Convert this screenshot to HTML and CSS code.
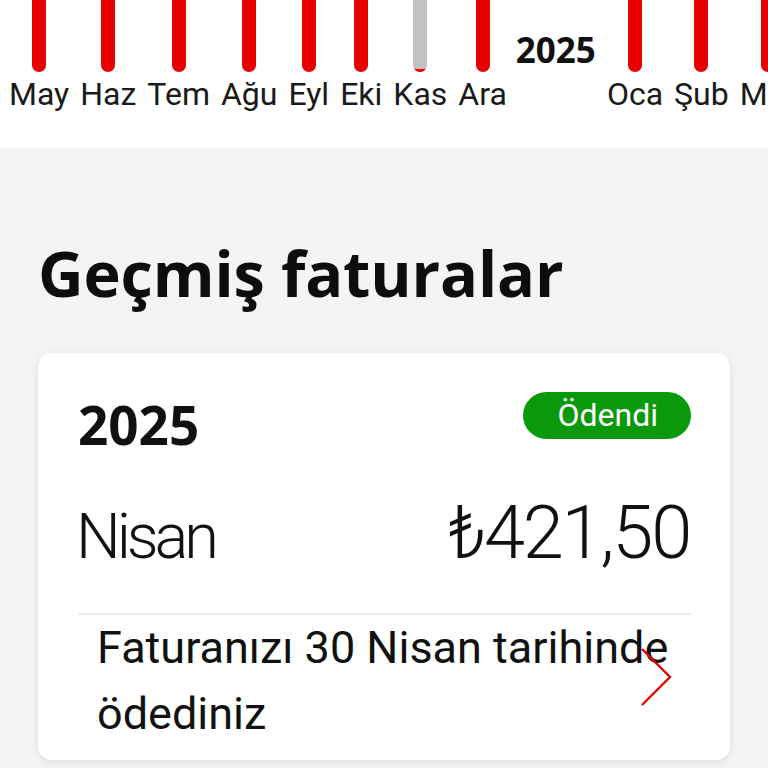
FILE: index.html
```html
<!DOCTYPE html>
<html lang="tr">
<head>
<meta charset="utf-8">
<title>Geçmiş faturalar</title>
<link rel="stylesheet" href="styles.css">
</head>
<body>
<header class="chart">
  <div class="months">
    <div class="month"><span class="bar"></span><span class="label">May</span></div>
    <div class="month"><span class="bar"></span><span class="label">Haz</span></div>
    <div class="month"><span class="bar"></span><span class="label">Tem</span></div>
    <div class="month"><span class="bar"></span><span class="label">Ağu</span></div>
    <div class="month"><span class="bar"></span><span class="label">Eyl</span></div>
    <div class="month"><span class="bar"></span><span class="label">Eki</span></div>
    <div class="month"><span class="bar bar-low"><span class="bar-fill"></span></span><span class="label">Kas</span></div>
    <div class="month"><span class="bar"></span><span class="label">Ara</span></div>
    <div class="year">2025</div>
    <div class="month"><span class="bar"></span><span class="label">Oca</span></div>
    <div class="month"><span class="bar"></span><span class="label">Şub</span></div>
    <div class="month"><span class="bar"></span><span class="label">Mar</span></div>
  </div>
</header>
<main class="content">
  <h1 class="title">Geçmiş faturalar</h1>
  <section class="card">
    <div class="card-top">
      <span class="card-year">2025</span>
      <span class="badge">Ödendi</span>
    </div>
    <div class="card-amount">
      <span class="bill-month">Nisan</span>
      <span class="amount">₺421,50</span>
    </div>
    <div class="card-foot">
      <p class="note">Faturanızı 30 Nisan tarihinde ödediniz</p>
      <svg class="chevron" width="32" height="60" viewBox="0 0 32 60" aria-hidden="true">
        <polyline points="2,2 30,30 2,58" fill="none" stroke="#e60000" stroke-width="2.4"/>
      </svg>
    </div>
  </section>
</main>
</body>
</html>
```
FILE: styles.css
```css
html, body {
  margin: 0;
  padding: 0;
}
body {
  background: #f4f4f4;
  font-family: Roboto, "Liberation Sans", sans-serif;
  color: #111;
  width: 768px;
  height: 768px;
  overflow: hidden;
}

/* chart header */
.chart {
  background: #fff;
  height: 148px;
  overflow: hidden;
}
.months {
  display: flex;
  align-items: flex-start;
  gap: 11px;
  padding-left: 9px;
  white-space: nowrap;
}
.month {
  display: flex;
  flex-direction: column;
  align-items: center;
  flex: none;
}
.bar {
  display: block;
  width: 14px;
  height: 72px;
  background: #e60000;
  border-radius: 0 0 7px 7px;
  position: relative;
  overflow: hidden;
}
.bar-low {
  background: #c2c2c2;
}
.bar-fill {
  position: absolute;
  left: 0;
  right: 0;
  bottom: 0;
  height: 3px;
  background: #e60000;
}
.label {
  margin-top: 3px;
  font-size: 32px;
  line-height: 38px;
  color: #1a1a1a;
}
.year {
  flex: none;
  padding-top: 30px;
  margin-left: -2px;
  font-family: "Open Sans", sans-serif;
  font-weight: 700;
  font-size: 35px;
  line-height: 40px;
  color: #111;
}

/* content */
.content {
  padding: 0 38px;
}
.title {
  margin: 88px 0 43px;
  font-family: "Open Sans", sans-serif;
  font-weight: 700;
  font-size: 63px;
  line-height: 74px;
  color: #0d0d0d;
  letter-spacing: -0.15px;
}
.card {
  background: #fff;
  border-radius: 14px;
  box-shadow: 0 2px 8px rgba(0, 0, 0, 0.09);
  padding: 39px 39px 13px 40px;
}
.card-top {
  display: flex;
  justify-content: space-between;
  align-items: flex-start;
}
.card-year {
  margin-top: 3px;
  font-family: "Open Sans", sans-serif;
  font-weight: 700;
  font-size: 53px;
  line-height: 60px;
  color: #111;
}
.badge {
  background: #0a990a;
  color: #fff;
  border-radius: 24px;
  height: 47px;
  padding: 0 33px 0 34px;
  font-size: 32px;
  line-height: 47px;
}
.card-amount {
  display: flex;
  justify-content: space-between;
  align-items: baseline;
  margin-top: 38px;
}
.bill-month {
  margin-left: -2px;
  font-weight: 300;
  font-size: 63px;
  line-height: 80px;
  letter-spacing: -0.065em;
  color: #111;
}
.amount {
  margin-right: 1px;
  font-weight: 300;
  font-size: 74px;
  line-height: 80px;
  letter-spacing: -0.03em;
  color: #111;
}
.card-foot {
  position: relative;
  margin-top: 36px;
  border-top: 2px solid #ececec;
  padding-left: 19px;
}
.note {
  margin: 0;
  font-size: 45px;
  line-height: 66px;
  color: #111;
}
.chevron {
  position: absolute;
  right: 19px;
  top: 32px;
}
```
